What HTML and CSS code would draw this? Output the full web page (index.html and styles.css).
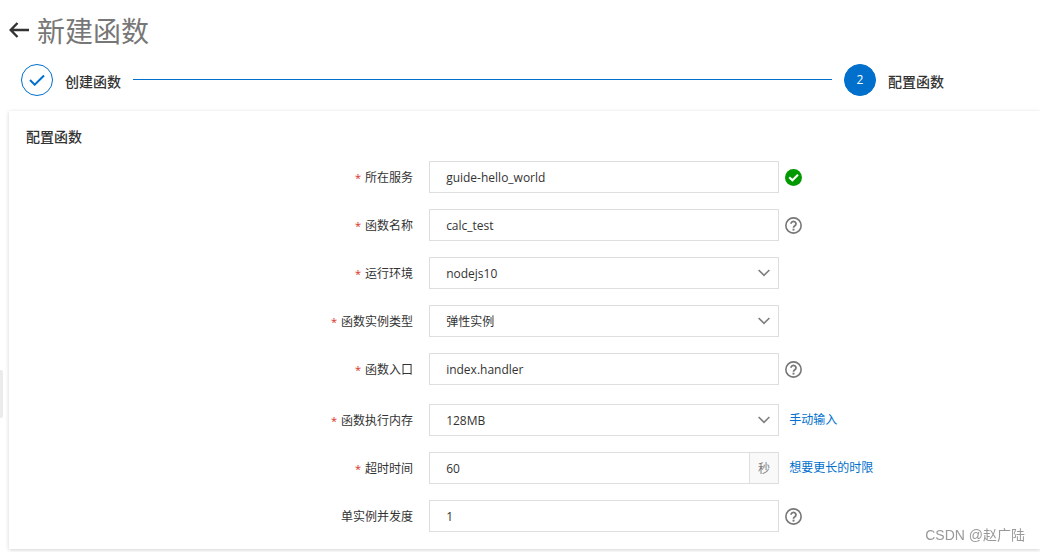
FILE: index.html
```html
<!DOCTYPE html>
<html lang="zh-CN">
<head>
<meta charset="utf-8">
<meta name="viewport" content="width=device-width, initial-scale=1">
<title>新建函数</title>
<link rel="stylesheet" href="styles.css">
</head>
<body>
<svg class="sprite" aria-hidden="true">
  <symbol id="help" viewBox="0 0 16 16">
    <circle cx="8" cy="8" r="7.2" fill="none" stroke="currentColor" stroke-width="1.5"/>
    <path d="M5.700 6.400a2.300 2.200 0 1 1 3.600 1.800C8.400 8.800 8 9.100 8 10" fill="none" stroke="currentColor" stroke-width="1.700"/>
    <path d="M7.100 11h1.800v1.800H7.100z" fill="currentColor"/>
  </symbol>
  <symbol id="chevron" viewBox="0 0 12 8">
    <path d="M.6 1 6 6.300 11.400 1" fill="none" stroke="currentColor" stroke-width="1.700"/>
  </symbol>
</svg>

<header class="header">
  <button class="back" type="button" aria-label="返回">
    <svg width="20" height="16" viewBox="0 0 20 16" fill="none" stroke="currentColor" stroke-width="2.400"><path d="M2 8h18M8.500 1 1.700 8l6.800 7"/></svg>
  </button>
  <h1 class="title">新建函数</h1>
</header>

<ol class="steps">
  <li class="step">
    <span class="dot"><svg width="16" height="12" viewBox="0 0 16 12" fill="none" stroke="currentColor" stroke-width="2"><path d="m1 6 4.700 4.700L15 1.500"/></svg></span>
    <span class="step-name">创建函数</span>
  </li>
  <li class="line" role="presentation"></li>
  <li class="step">
    <span class="dot current">2</span>
    <span class="step-name">配置函数</span>
  </li>
</ol>

<main class="card">
  <h2 class="card-title">配置函数</h2>
  <form class="form">
    <div class="row">
      <label class="label required" for="service">所在服务</label>
      <div class="control"><input class="field" id="service" type="text" value="guide-hello_world"></div>
      <div class="extra"><svg class="icon" viewBox="0 0 16 16" role="img" aria-label="有效"><circle cx="8" cy="8" r="8" fill="#090"/><path d="m4 7.700 3 3L12.200 5.500" fill="none" stroke="#fff" stroke-width="2"/></svg></div>
    </div>
    <div class="row">
      <label class="label required" for="name">函数名称</label>
      <div class="control"><input class="field" id="name" type="text" value="calc_test"></div>
      <div class="extra"><svg class="icon" role="img" aria-label="帮助"><use href="#help"/></svg></div>
    </div>
    <div class="row">
      <label class="label required" for="runtime">运行环境</label>
      <div class="control"><select class="field" id="runtime"><option>nodejs10</option></select><svg class="chevron" aria-hidden="true"><use href="#chevron"/></svg></div>
    </div>
    <div class="row">
      <label class="label required" for="type">函数实例类型</label>
      <div class="control"><select class="field" id="type"><option>弹性实例</option></select><svg class="chevron" aria-hidden="true"><use href="#chevron"/></svg></div>
    </div>
    <div class="row entry">
      <label class="label required" for="handler">函数入口</label>
      <div class="control"><input class="field" id="handler" type="text" value="index.handler"></div>
      <div class="extra"><svg class="icon" role="img" aria-label="帮助"><use href="#help"/></svg></div>
    </div>
    <div class="row">
      <label class="label required" for="memory">函数执行内存</label>
      <div class="control"><select class="field" id="memory"><option>128MB</option></select><svg class="chevron" aria-hidden="true"><use href="#chevron"/></svg></div>
      <div class="extra link-extra"><a class="link" href="#">手动输入</a></div>
    </div>
    <div class="row">
      <label class="label required" for="timeout">超时时间</label>
      <div class="control"><input class="field" id="timeout" type="text" value="60"><span class="unit">秒</span></div>
      <div class="extra link-extra"><a class="link" href="#">想要更长的时限</a></div>
    </div>
    <div class="row">
      <label class="label" for="concurrency">单实例并发度</label>
      <div class="control"><input class="field" id="concurrency" type="text" value="1"></div>
      <div class="extra"><svg class="icon" role="img" aria-label="帮助"><use href="#help"/></svg></div>
    </div>
  </form>
</main>
<div class="handle"></div>
<div class="watermark">CSDN @赵广陆</div>
</body>
</html>
```
FILE: styles.css
```css
* { box-sizing: border-box; }

body {
  margin: 0;
  padding-bottom: 3px;
  background: #fff;
  color: #333;
  font: 12px/18px "Open Sans", "Noto Sans CJK SC", sans-serif;
}

.sprite { position: absolute; width: 0; height: 0; }

.header {
  display: flex;
  align-items: center;
  gap: 8px;
  padding: 12px 9px 0;
}

.back {
  display: flex;
  padding: 0;
  border: 0;
  background: none;
  color: #333;
}

.title {
  margin: 0;
  padding-top: 2px;
  color: #777;
  font-size: 28px;
  font-weight: 400;
  line-height: 34px;
}

.steps {
  display: flex;
  align-items: center;
  gap: 12px;
  margin: 0;
  padding: 16px 96px 15px 21px;
  list-style: none;
}

.step { display: flex; align-items: center; gap: 12px; }

.dot {
  display: flex;
  align-items: center;
  justify-content: center;
  width: 32px;
  height: 32px;
  border: 1px solid #0070cc;
  border-radius: 50%;
  color: #0070cc;
}

.current { background: #0070cc; color: #fff; }

.step-name { padding-top: 4px; font-size: 14px; font-weight: 500; }

.line { flex: 1; height: 1px; margin-bottom: 2px; background: #0070cc; }

.card {
  margin-left: 9px;
  padding: 16px 19px 17px 17px;
  box-shadow: 0 1px 4px rgba(0, 0, 0, 0.18);
}

.card-title {
  margin: 0 0 14px;
  font-size: 14px;
  font-weight: 500;
  line-height: 20px;
}

.form { display: flex; flex-direction: column; gap: 16px; }

.row {
  display: grid;
  grid-template-columns: 5fr 350px 3fr;
  align-items: center;
}

.entry { margin-bottom: 3px; }

.label { padding: 2px 16px 0 0; text-align: right; }

.required::before { content: "*"; margin-right: 4px; color: #d93026; font-size: 11px; }

.control { display: flex; position: relative; }

.field {
  flex: 1;
  min-width: 0;
  height: 32px;
  margin: 0;
  padding: 0 16px;
  border: 1px solid #dedede;
  border-radius: 0;
  appearance: none;
  background: #fff;
  color: #333;
  font: inherit;
}

select.field { padding-top: 2px; }

.chevron {
  position: absolute;
  top: 12px;
  right: 9px;
  width: 12px;
  height: 8px;
  color: #808080;
  pointer-events: none;
}

.unit {
  display: flex;
  align-items: center;
  justify-content: center;
  width: 29px;
  padding-top: 2px;
  border: 1px solid #dedede;
  border-left: 0;
  background: #f9f9f9;
  color: #808080;
}

.extra { display: flex; padding-left: 6px; }

.link-extra { padding-left: 10px; }

.icon { width: 17px; height: 17px; color: #777; }

.link { color: #0070cc; text-decoration: none; }

.handle {
  position: fixed;
  top: 370px;
  left: 0;
  width: 3px;
  height: 48px;
  border-radius: 0 2px 2px 0;
  background: #ebebeb;
}

.watermark {
  position: fixed;
  right: 15px;
  bottom: 7px;
  color: #999;
  font: 14px/20px "Liberation Sans", "Noto Sans CJK SC", sans-serif;
}
```
